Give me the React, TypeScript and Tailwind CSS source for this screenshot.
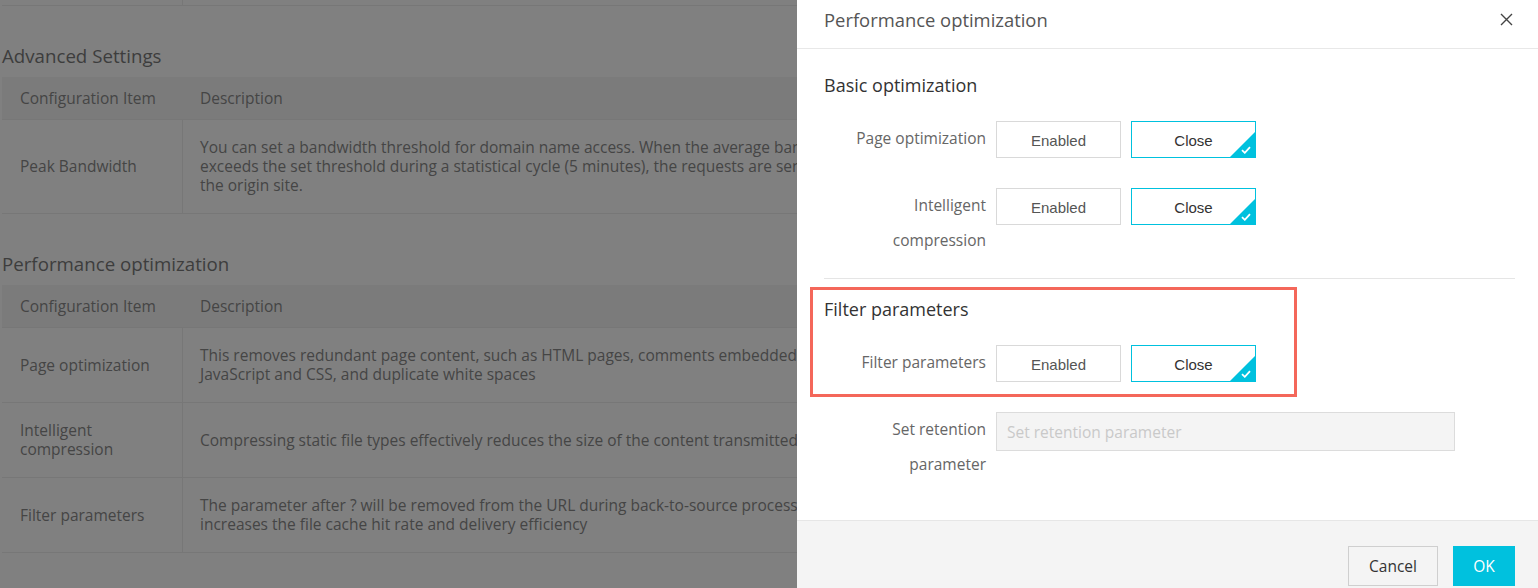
import { Fragment } from "react";

const advanced = [
  {
    name: ["Peak Bandwidth"],
    desc: [
      "You can set a bandwidth threshold for domain name access. When the average bandwidth",
      "exceeds the set threshold during a statistical cycle (5 minutes), the requests are sent to",
      "the origin site.",
    ],
    h: "h-[94px]",
  },
];

const perf = [
  {
    name: ["Page optimization"],
    desc: [
      "This removes redundant page content, such as HTML pages, comments embedded in",
      "JavaScript and CSS, and duplicate white spaces",
    ],
    h: "h-[75px]",
  },
  {
    name: ["Intelligent", "compression"],
    desc: ["Compressing static file types effectively reduces the size of the content transmitted"],
    h: "h-[75px]",
  },
  {
    name: ["Filter parameters"],
    desc: [
      "The parameter after ? will be removed from the URL during back-to-source processing, which",
      "increases the file cache hit rate and delivery efficiency",
    ],
    h: "h-[75px]",
  },
];

type Row = { name: string[]; desc: string[]; h: string };

function ConfigTable({ rows }: { rows: Row[] }) {
  return (
    <div className="w-[1400px]">
      <div className="flex h-[43px] items-center border-b border-[#777] bg-[#7b7b7b]">
        <div className="w-[181px] pl-[18px]">Configuration Item</div>
        <div className="pl-[17px]">Description</div>
      </div>
      {rows.map((r) => (
        <div key={r.name.join()} className={`flex border-b border-[#777] ${r.h}`}>
          <div className="flex w-[181px] shrink-0 flex-col justify-center border-r border-[#777] pl-[18px]">
            {r.name.map((n) => (
              <span key={n}>{n}</span>
            ))}
          </div>
          <div className="flex flex-col justify-center pl-[17px]">
            {r.desc.map((d) => (
              <span key={d} className="whitespace-nowrap">
                {d}
              </span>
            ))}
          </div>
        </div>
      ))}
    </div>
  );
}

function Choice({ label, selected }: { label: string; selected?: boolean }) {
  return (
    <button
      className={`relative h-[37px] w-[125px] shrink-0 overflow-hidden border bg-white pt-[2px] font-['Liberation_Sans',Arial,sans-serif] text-[15px] ${
        selected ? "border-[#00c1de] text-[#333]" : "border-[#d9d9d9] text-[#555]"
      }`}
    >
      {label}
      {selected && (
        <>
          <span className="absolute bottom-0 right-0 h-0 w-0 border-b-[25px] border-l-[25px] border-b-[#00c1de] border-l-transparent" />
          <svg className="absolute bottom-[3px] right-[4px]" width="10" height="8" viewBox="0 0 10 8" fill="none">
            <path d="M1 4.2 L3.8 6.8 L9 1.2" stroke="white" strokeWidth="1.8" />
          </svg>
        </>
      )}
    </button>
  );
}

function FormRow({ label, children }: { label: string[]; children: React.ReactNode }) {
  return (
    <div className="flex items-start gap-[10px]">
      <div className="w-[162px] shrink-0 text-right text-[15.5px] leading-[35px] text-[#666]">
        {label.map((l) => (
          <Fragment key={l}>
            <div>{l}</div>
          </Fragment>
        ))}
      </div>
      <div className="flex gap-[10px]">{children}</div>
    </div>
  );
}

export default function App() {
  return (
    <div className="relative h-[588px] w-[1538px] overflow-hidden bg-[#808080] font-['Open_Sans',sans-serif] text-[15.5px] leading-[19px] text-[#454545]">
      <main className="pl-[2px]">
        <div className="flex h-[6px] border-b border-[#777]">
          <div className="w-[181px] border-r border-[#777]" />
        </div>
        <h2 className="pt-[29px] text-[18.7px] leading-[42px] text-[#3d3d3d]">Advanced Settings</h2>
        <ConfigTable rows={advanced} />
        <h2 className="pt-[29px] text-[18.7px] leading-[42px] text-[#3d3d3d]">Performance optimization</h2>
        <ConfigTable rows={perf} />
      </main>

      <aside className="absolute right-0 top-0 flex h-full w-[741px] flex-col bg-white">
        <header className="flex h-[49px] shrink-0 items-start justify-between border-b border-[#e8e8e8] pl-[27px] pr-[25px] pt-[6px]">
          <h3 className="text-[18.4px] leading-[28px] text-[#555]">Performance optimization</h3>
          <svg className="mt-[7px]" width="13" height="13" viewBox="0 0 13 13" fill="none">
            <path d="M1 1 L12 12 M12 1 L1 12" stroke="#444" strokeWidth="1.4" />
          </svg>
        </header>

        <div className="flex-1 pl-[27px] pr-[23px] pt-[24px]">
          <h4 className="text-[18px] leading-[24px] text-[#333]">Basic optimization</h4>
          <div className="mt-[24px]">
            <FormRow label={["Page optimization"]}>
              <Choice label="Enabled" />
              <Choice label="Close" selected />
            </FormRow>
          </div>
          <div className="mt-[30px]">
            <FormRow label={["Intelligent", "compression"]}>
              <Choice label="Enabled" />
              <Choice label="Close" selected />
            </FormRow>
          </div>
          <div className="mt-[20px] h-px bg-[#e5e5e5]" />

          <section className="relative mt-[18px]">
            <div className="pointer-events-none absolute -left-[14px] -top-[10px] h-[110px] w-[487px] border-[3px] border-[#f4675a]" />
            <h4 className="text-[18px] leading-[24px] text-[#333]">Filter parameters</h4>
            <div className="mt-[24px]">
              <FormRow label={["Filter parameters"]}>
                <Choice label="Enabled" />
                <Choice label="Close" selected />
              </FormRow>
            </div>
          </section>

          <div className="mt-[30px]">
            <FormRow label={["Set retention", "parameter"]}>
              <input
                readOnly
                placeholder="Set retention parameter"
                className="h-[39px] w-[459px] border border-[#dcdcdc] bg-[#f4f4f4] px-[10px] text-[15.5px] outline-none placeholder:text-[#c9c9c9]"
              />
            </FormRow>
          </div>
        </div>

        <footer className="flex h-[68px] shrink-0 justify-end gap-[15px] border-t border-[#e6e6e6] bg-[#f4f4f4] pr-[23px] pt-[25px]">
          <button className="h-[40px] w-[90px] border border-[#cfcfcf] text-[15.5px] text-[#333]">Cancel</button>
          <button className="h-[40px] w-[62px] bg-[#00c1de] text-[15.5px] text-white">OK</button>
        </footer>
      </aside>
    </div>
  );
}
